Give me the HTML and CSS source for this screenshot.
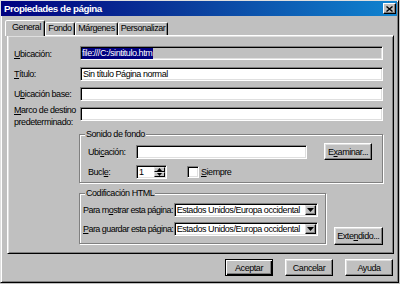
FILE: index.html
```html
<!DOCTYPE html>
<html lang="es">
<head>
<meta charset="utf-8">
<title>Propiedades de página</title>
<link rel="stylesheet" href="styles.css">
</head>
<body>
<div class="win">
  <div class="titlebar">
    <span class="title">Propiedades de página</span>
    <span class="close"><svg width="7" height="6" viewBox="0 0 7 6"><path d="M0.5 0.5 L6.5 5.5 M6.5 0.5 L0.5 5.5" stroke="#000" stroke-width="1.4" fill="none"/></svg></span>
  </div>
  <div class="content">
    <div class="tabs">
      <div class="tab sel w-general">General</div>
      <div class="tab w-fondo">Fondo</div>
      <div class="tab w-marg">Márgenes</div>
      <div class="tab w-pers">Personalizar</div>
    </div>
    <div class="panel">
      <div class="form">
        <span class="lbl"><u>U</u>bicación:</span>
        <div class="field disabled first"><span class="hl">file:///C:/sintitulo.htm</span></div>
        <span class="lbl"><u>T</u>ítulo:</span>
        <div class="field">Sin título Página normal</div>
        <span class="lbl">U<u>b</u>icación base:</span>
        <div class="field"></div>
        <span class="lbl two"><u>M</u>arco de destino<br>predeterminado:</span>
        <div class="field"></div>
      </div>

      <fieldset class="group g1">
        <legend>Sonido de fondo</legend>
        <div class="srow r1">
          <span class="slbl">Ubi<u>c</u>ación:</span>
          <div class="field loc"></div>
          <button class="btn exam">E<u>x</u>aminar...</button>
        </div>
        <div class="srow r2">
          <span class="slbl">Bucl<u>e</u>:</span>
          <div class="spin">
            <span class="spintext">1</span>
            <span class="arrows">
              <span class="arr"><svg width="5" height="3" viewBox="0 0 5 3"><path d="M2.5 0 L5 3 L0 3 Z" fill="#000"/></svg></span>
              <span class="arr"><svg width="5" height="3" viewBox="0 0 5 3"><path d="M0 0 L5 0 L2.5 3 Z" fill="#000"/></svg></span>
            </span>
          </div>
          <span class="chk"></span>
          <span class="chklbl"><u>S</u>iempre</span>
        </div>
      </fieldset>

      <div class="bottomrow">
        <fieldset class="group g2">
          <legend>Codificación HTML</legend>
          <div class="crow">
            <span class="clbl">Para m<u>o</u>strar esta página:</span>
            <div class="select"><span class="seltext">Estados Unidos/Europa occidental</span><span class="drop"><svg width="7" height="4" viewBox="0 0 7 4"><path d="M0 0 L7 0 L3.5 4 Z" fill="#000"/></svg></span></div>
          </div>
          <div class="crow second">
            <span class="clbl"><u>P</u>ara guardar esta página:</span>
            <div class="select"><span class="seltext">Estados Unidos/Europa occidental</span><span class="drop"><svg width="7" height="4" viewBox="0 0 7 4"><path d="M0 0 L7 0 L3.5 4 Z" fill="#000"/></svg></span></div>
          </div>
        </fieldset>
        <button class="btn ext">Exte<u>n</u>dido...</button>
      </div>
    </div>
    <div class="buttons">
      <button class="btn big def">Aceptar</button>
      <button class="btn big">Cancelar</button>
      <button class="btn big">Ayuda</button>
    </div>
  </div>
</div>
</body>
</html>
```
FILE: styles.css
```css
* { box-sizing: border-box; }
html, body { margin: 0; padding: 0; }
body {
  width: 400px;
  height: 284px;
  overflow: hidden;
  background: #c0c0c0;
  font-family: "Liberation Sans", Arial, sans-serif;
  font-size: 9px;
  letter-spacing: -0.45px;
  line-height: 12px;
  color: #000;
}
u { text-decoration: underline; text-underline-offset: 1px; }

.win {
  width: 399px;
  height: 283px;
  background: #c0c0c0;
  border: 1px solid;
  border-color: #dfdfdf #000 #000 #dfdfdf;
  box-shadow: inset 1px 1px 0 #fff, inset -1px -1px 0 #808080;
  padding-right: 1px;
}

.titlebar {
  height: 15px;
  background: linear-gradient(to right, #000080 0%, #0a3a9a 45%, #1084d0 100%);
  display: flex;
  align-items: center;
  justify-content: space-between;
  padding: 0 1px 0 3px;
}
.title {
  color: #fff;
  font-weight: bold;
  font-size: 9.8px;
  letter-spacing: -0.45px;
}
.close {
  width: 13px;
  height: 11px;
  background: #c0c0c0;
  border: 1px solid;
  border-color: #fff #000 #000 #fff;
  box-shadow: inset -1px -1px 0 #808080;
  display: flex;
  align-items: center;
  justify-content: center;
}

.content {
  padding: 4px 3px 0 6px;
}

.tabs {
  display: flex;
  align-items: flex-end;
  height: 15px;
  margin-left: -2px;
  position: relative;
  z-index: 1;
}
.tab {
  height: 13px;
  border: 1px solid;
  border-bottom: none;
  border-color: #fff #000 transparent #fff;
  box-shadow: inset -1px 0 0 #808080;
  border-radius: 2px 2px 0 0;
  background: #c0c0c0;
  text-align: center;
  line-height: 11px;
  white-space: nowrap;
}
.tab.sel {
  height: 16px;
  margin-bottom: -1px;
  line-height: 13px;
  padding-left: 3px;
}
.w-general { width: 40px; }
.w-fondo { width: 30px; }
.w-marg { width: 43px; }
.w-pers { width: 50px; }

.panel {
  height: 219px;
  border: 1px solid;
  border-color: #fff #000 #000 #fff;
  box-shadow: inset 1px 1px 0 #dfdfdf, inset -1px -1px 0 #808080;
  padding: 10px 10px 0 6px;
}

.form {
  display: grid;
  grid-template-columns: 66px 1fr;
  grid-template-rows: 15px 14px 14px 14px;
  row-gap: 6px;
}
.lbl { align-self: center; white-space: nowrap; }
.lbl.two { align-self: start; margin-top: -3px; line-height: 12px; }

.field {
  height: 14px;
  background: #fff;
  border: 1px solid;
  border-color: #808080 #fff #fff #808080;
  box-shadow: inset 1px 1px 0 #000, inset -1px -1px 0 #dfdfdf;
  padding: 0 2px;
  line-height: 12px;
  white-space: nowrap;
  overflow: hidden;
}
.field.first { align-self: start; }
.field.disabled { background: #c0c0c0; padding-left: 1px; }
.hl { background: #000080; color: #fff; display: inline-block; line-height: 11px; padding-right: 1px; }

.group {
  margin: 0;
  min-width: 0;
  border: 1px solid #808080;
  box-shadow: inset 1px 1px 0 #fff, 1px 1px 0 #fff;
}
.group legend {
  padding: 0 1px;
  margin-left: -3px;
  background: #c0c0c0;
  line-height: 12px;
}

.g1 {
  margin: 7px 0 0 65px;
  padding: 3px 10px 3px 8px;
}
.srow { display: flex; align-items: center; }
.srow.r1 { height: 17px; }
.srow.r2 { height: 14px; margin-top: 5px; }
.slbl { width: 48px; white-space: nowrap; }
.field.loc { width: 171px; }
.btn {
  background: #c0c0c0;
  border: 1px solid;
  border-color: #fff #000 #000 #fff;
  box-shadow: inset -1px -1px 0 #808080, inset 1px 1px 0 #dfdfdf;
  font-family: inherit;
  font-size: 9px;
  letter-spacing: -0.45px;
  line-height: 12px;
  color: #000;
  padding: 0;
  white-space: nowrap;
}
.btn.exam { width: 48px; height: 17px; margin-left: auto; }

.spin {
  display: flex;
  width: 31px;
  height: 14px;
  background: #fff;
  border: 1px solid;
  border-color: #808080 #fff #fff #808080;
  box-shadow: inset 1px 1px 0 #000, inset -1px -1px 0 #dfdfdf;
}
.spintext { flex: 1; padding-left: 2px; line-height: 12px; }
.arrows { display: flex; flex-direction: column; width: 12px; padding: 1px 1px 1px 0; }
.arr {
  flex: 1;
  background: #c0c0c0;
  border: 1px solid;
  border-color: #dfdfdf #000 #000 #dfdfdf;
  display: flex;
  align-items: center;
  justify-content: center;
}
.arr svg { display: block; }
.chk {
  width: 12px;
  height: 12px;
  margin-left: 20px;
  background: #fff;
  border: 1px solid;
  border-color: #808080 #fff #fff #808080;
  box-shadow: inset 1px 1px 0 #000, inset -1px -1px 0 #dfdfdf;
}
.chklbl { margin-left: 2px; }

.bottomrow {
  display: flex;
  align-items: flex-end;
  margin: 4px 0 0 65px;
}
.g2 {
  width: 250px;
  padding: 4px 7px 7px 3px;
}
.g2 legend { margin-left: 2px; }
.crow { display: flex; align-items: center; height: 14px; }
.crow.second { margin-top: 5px; }
.clbl { width: 92px; white-space: nowrap; letter-spacing: -0.55px; }
.select {
  display: flex;
  width: 146px;
  height: 14px;
  background: #fff;
  border: 1px solid;
  border-color: #808080 #fff #fff #808080;
  box-shadow: inset 1px 1px 0 #000, inset -1px -1px 0 #dfdfdf;
  padding: 1px;
}
.seltext { flex: 1; padding-left: 1px; line-height: 10px; white-space: nowrap; overflow: hidden; }
.drop {
  width: 11px;
  background: #c0c0c0;
  border: 1px solid;
  border-color: #dfdfdf #000 #000 #dfdfdf;
  box-shadow: inset -1px -1px 0 #808080;
  display: flex;
  align-items: center;
  justify-content: center;
}
.drop svg { display: block; }
.btn.ext { width: 50px; height: 18px; margin-left: 8px; margin-bottom: -1px; }

.buttons {
  display: flex;
  justify-content: flex-end;
  gap: 12px;
  margin-top: 5px;
  padding-right: 1px;
}
.btn.big { width: 48px; height: 17px; }
.btn.def {
  border-color: #000;
  box-shadow: inset 1px 1px 0 #fff, inset -1px -1px 0 #000, inset -2px -2px 0 #808080;
}
```
